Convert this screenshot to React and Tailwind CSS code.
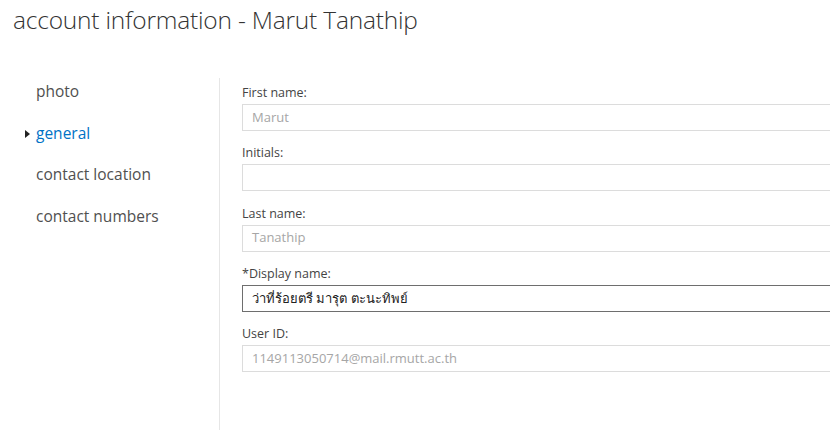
import React from 'react';

const FIELDS = [
  { label: 'First name:', value: 'Marut', muted: true },
  { label: 'Initials:', value: '', muted: true },
  { label: 'Last name:', value: 'Tanathip', muted: true },
  { label: '*Display name:', value: 'ว่าที่ร้อยตรี มารุต ตะนะทิพย์', muted: false },
  { label: 'User ID:', value: '1149113050714@mail.rmutt.ac.th', muted: true },
];

const NAV = ['photo', 'general', 'contact location', 'contact numbers'];

export default function App() {
  return (
    <div
      className="w-[830px] h-[430px] overflow-hidden bg-white"
      style={{ fontFamily: '"Open Sans", "Noto Sans", sans-serif' }}
    >
      {/* titulo */}
      <h1 className="pl-[13px] pt-[2px] h-[71px] text-[24.5px] font-light text-[#333] tracking-[-0.2px]">
        account information - Marut Tanathip
      </h1>

      <div className="flex h-[359px]">
        {/* menu lateral */}
        <nav className="w-[219px] shrink-0">
          {NAV.map((item) => {
            const active = item === 'general';
            return (
              <div key={item} className="relative h-[41.5px] flex items-center pl-[36px] text-[15.5px] text-[#505050]">
                {active && (
                  <span className="absolute left-[25px] top-[17px] w-0 h-0 border-y-[4px] border-y-transparent border-l-[5px] border-l-[#222]" />
                )}
                <span className={active ? 'text-[#0072c6]' : ''}>{item}</span>
              </div>
            );
          })}
        </nav>

        <div className="w-px mt-[7px] bg-[#e6e6e6] shrink-0" />

        {/* formulario */}
        <div className="flex-1 pl-[22px] pt-[12px] overflow-hidden">
          {FIELDS.map((f) => (
            <div key={f.label} className="h-[60.3px]">
              <div className="h-[21px] text-[12.5px] text-[#444] leading-[18px] pt-[1px]">{f.label}</div>
              <div
                className={`w-[620px] h-[27px] flex items-center px-[9px] text-[13px] border ${
                  f.muted ? 'border-[#dcdcdc] text-[#a6a6a6]' : 'border-[#6e6e6e] text-[#222]'
                }`}
                style={!f.muted ? { fontFamily: '"Noto Sans", "Open Sans", sans-serif' } : undefined}
              >
                {f.value}
              </div>
            </div>
          ))}
        </div>
      </div>
    </div>
  );
}
